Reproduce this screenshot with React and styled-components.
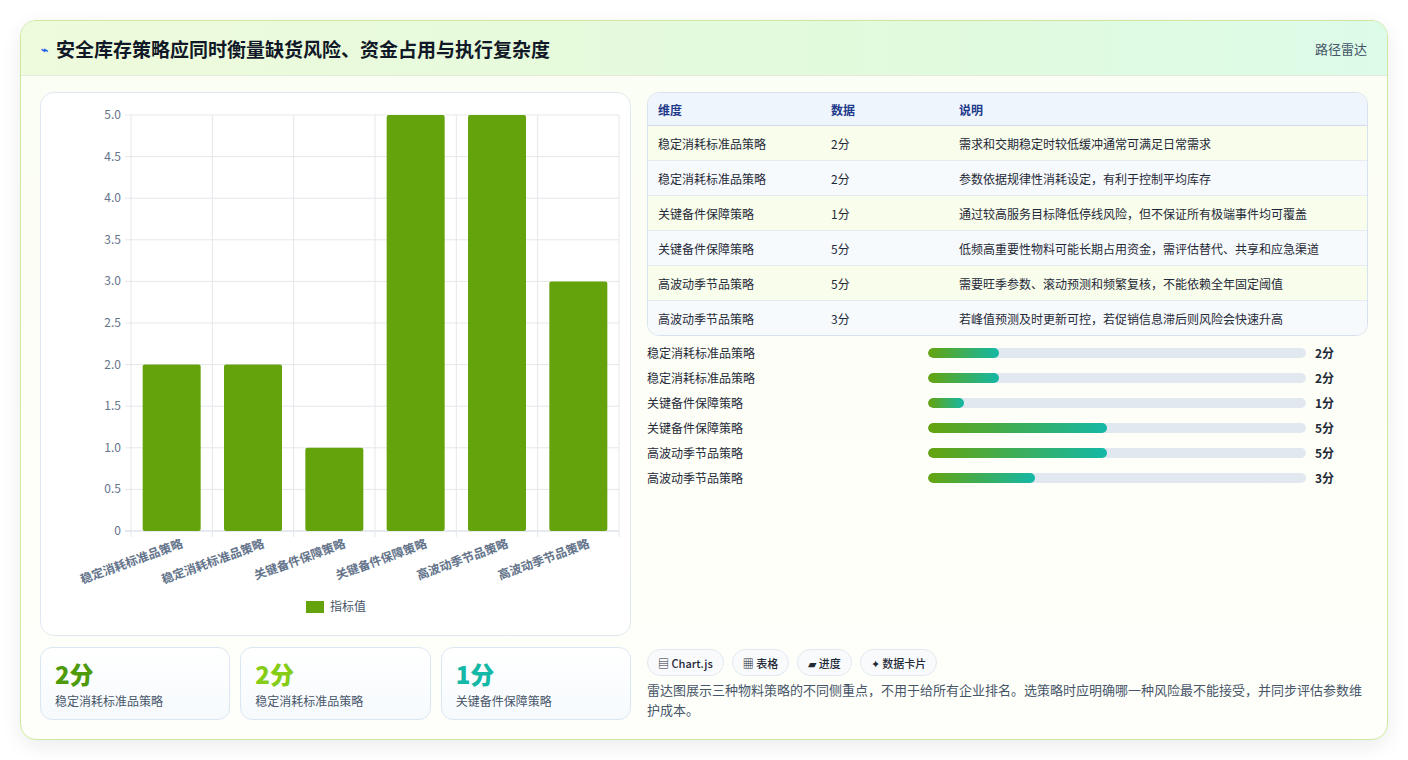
import React from 'react';
import styled, { createGlobalStyle } from 'styled-components';

const Global = createGlobalStyle`
  body { margin: 0; background: #fff; font-family: "Noto Sans CJK SC", "Noto Sans", sans-serif; }
`;

const Page = styled.div`
  width: 1408px; height: 760px; box-sizing: border-box; padding: 20px;
`;

const Card = styled.div`
  height: 720px; box-sizing: border-box; border: 1px solid #cfe8a0; border-radius: 16px;
  background: linear-gradient(180deg, #fbfef4 0%, #fefffa 100%);
  box-shadow: 0 6px 20px rgba(0,0,0,0.08); overflow: hidden;
  display: flex; flex-direction: column;
`;

const Header = styled.div`
  height: 56px; box-sizing: border-box; padding: 0 20px;
  display: flex; align-items: center; justify-content: space-between;
  background: linear-gradient(90deg, #eefbdc 0%, #e2fadc 60%, #dcfbe8 100%);
  border-bottom: 1px solid #e2ecd8;
`;

const Title = styled.h1`
  margin: 0; font-size: 19px; font-weight: 700; color: #111827;
  display: flex; align-items: center; gap: 8px;
`;

const Source = styled.span`font-size: 13px; color: #475569;`;

const Body = styled.div`
  flex: 1; padding: 16px 19px 19px; display: grid;
  grid-template-columns: 591px 1fr; gap: 16px;
`;

const Col = styled.div`display: flex; flex-direction: column; gap: 11px; min-height: 0;`;

const ChartBox = styled.div`
  height: 544px; box-sizing: border-box; border: 1px solid #e2e8f0; border-radius: 14px; background: #fff;
`;

const Stats = styled.div`display: grid; grid-template-columns: repeat(3, 1fr); gap: 10px;`;

const Stat = styled.div`
  height: 73px; box-sizing: border-box; border: 1px solid #dbe6f3; border-radius: 12px;
  background: linear-gradient(180deg, #ffffff, #f6fafd); padding: 10px 14px;
`;

const StatVal = styled.div`font-size: 24px; font-weight: 800; line-height: 32px; color: ${p => p.c};`;
const StatLbl = styled.div`font-size: 12px; color: #475569; margin-top: 2px;`;

const Table = styled.table`
  width: 100%; border-collapse: separate; border-spacing: 0; font-size: 12px; color: #1f2937;
  border: 1px solid #d8e2ee; border-radius: 12px; overflow: hidden;
  th { background: #eef5fd; color: #1e3a8a; font-weight: 600; text-align: left; height: 32px; padding: 0 10px; border-bottom: 1px solid #d3dde9; }
  td { height: 34px; padding: 0 10px; border-top: 1px solid #e5ebf2; }
  tbody tr:first-child td { border-top: none; }
  tbody tr:nth-child(odd) td { background: #f8fdec; }
  tbody tr:nth-child(even) td { background: #f7fafd; }
`;

const Bars = styled.div`display: flex; flex-direction: column; gap: 9px; margin-top: 8px;`;
const BarRow = styled.div`
  display: grid; grid-template-columns: 272px 378px 1fr; align-items: center; gap: 9px;
  font-size: 12px; color: #1f2937; height: 16px;
`;
const Track = styled.div`height: 10px; border-radius: 5px; background: #e2e8f0; overflow: hidden;`;
const Fill = styled.div`height: 100%; border-radius: 5px; background: linear-gradient(90deg, #65a30d, #14b8a6);`;
const BarVal = styled.span`font-weight: 700;`;

const Spacer = styled.div`flex: 1;`;
const Tags = styled.div`display: flex; gap: 8px;`;
const Tag = styled.span`
  height: 27px; box-sizing: border-box; padding: 0 10px; display: flex; align-items: center;
  border: 1px solid #e2e8f0; border-radius: 14px; background: #f8fafc; font-size: 11px; color: #1f2937; font-weight: 500;
`;
const Note = styled.p`margin: 4px 0 0; font-size: 13px; line-height: 20px; color: #475569;`;

const rows = [
  ['稳定消耗标准品策略', 2, '需求和交期稳定时较低缓冲通常可满足日常需求'],
  ['稳定消耗标准品策略', 2, '参数依据规律性消耗设定，有利于控制平均库存'],
  ['关键备件保障策略', 1, '通过较高服务目标降低停线风险，但不保证所有极端事件均可覆盖'],
  ['关键备件保障策略', 5, '低频高重要性物料可能长期占用资金，需评估替代、共享和应急渠道'],
  ['高波动季节品策略', 5, '需要旺季参数、滚动预测和频繁复核，不能依赖全年固定阈值'],
  ['高波动季节品策略', 3, '若峰值预测及时更新可控，若促销信息滞后则风险会快速升高'],
];

function Chart() {
  const x0 = 90, x1 = 578, y0 = 438, yTop = 22;
  const h = (y0 - yTop) / 10, cw = (x1 - x0) / 6;
  const ticks = Array.from({ length: 11 }, (_, i) => i);
  return (
    <svg width="589" height="542" fontFamily="Noto Sans CJK SC, sans-serif">
      {ticks.map(i => (
        <g key={i}>
          <line x1={x0 - 6} x2={x1} y1={y0 - i * h} y2={y0 - i * h} stroke={i === 0 ? '#cbd5e1' : '#e5e7eb'} />
          <text x={x0 - 10} y={y0 - i * h + 4} fontSize="12" fill="#64748b" textAnchor="end">{i === 0 ? '0' : (i / 2).toFixed(1)}</text>
        </g>
      ))}
      {Array.from({ length: 7 }, (_, i) => (
        <line key={i} x1={x0 + i * cw} x2={x0 + i * cw} y1={yTop} y2={y0 + 6} stroke="#e5e7eb" />
      ))}
      {rows.map((r, i) => {
        const bh = r[1] * 2 * h;
        const cx = x0 + i * cw + cw / 2;
        return (
          <g key={i}>
            <rect x={cx - 29} y={y0 - bh} width="58" height={bh} rx="2" fill="#65a30d" />
            <text transform={`translate(${cx + 12},${y0 + 16}) rotate(-20)`} fontSize="12" fontWeight="600" fill="#64748b" textAnchor="end">{r[0]}</text>
          </g>
        );
      })}
      <rect x="265" y="508" width="18" height="12" fill="#65a30d" />
      <text x="289" y="518" fontSize="12" fill="#475569">指标值</text>
    </svg>
  );
}

export default function App() {
  return (
    <Page>
      <Global />
      <Card>
        <Header>
          <Title><span style={{ fontSize: 12, color: '#2563eb' }}>⌁</span>安全库存策略应同时衡量缺货风险、资金占用与执行复杂度</Title>
          <Source>路径雷达</Source>
        </Header>
        <Body>
          <Col>
            <ChartBox><Chart /></ChartBox>
            <Stats>
              <Stat><StatVal c="#4d9a0a">2分</StatVal><StatLbl>稳定消耗标准品策略</StatLbl></Stat>
              <Stat><StatVal c="#84cc16">2分</StatVal><StatLbl>稳定消耗标准品策略</StatLbl></Stat>
              <Stat><StatVal c="#14b8a6">1分</StatVal><StatLbl>关键备件保障策略</StatLbl></Stat>
            </Stats>
          </Col>
          <Col style={{ gap: 0 }}>
            <Table>
              <thead><tr><th style={{ width: 153 }}>维度</th><th style={{ width: 108 }}>数据</th><th>说明</th></tr></thead>
              <tbody>
                {rows.map((r, i) => (
                  <tr key={i}><td>{r[0]}</td><td>{r[1]}分</td><td>{r[2]}</td></tr>
                ))}
              </tbody>
            </Table>
            <Bars>
              {rows.map((r, i) => (
                <BarRow key={i}>
                  <span>{r[0]}</span>
                  <Track><Fill style={{ width: `${r[1] * 9.45}%` }} /></Track>
                  <BarVal>{r[1]}分</BarVal>
                </BarRow>
              ))}
            </Bars>
            <Spacer />
            <Tags>
              <Tag>▤ Chart.js</Tag><Tag>▦ 表格</Tag><Tag>▰ 进度</Tag><Tag>✦ 数据卡片</Tag>
            </Tags>
            <Note>雷达图展示三种物料策略的不同侧重点，不用于给所有企业排名。选策略时应明确哪一种风险最不能接受，并同步评估参数维护成本。</Note>
          </Col>
        </Body>
      </Card>
    </Page>
  );
}
